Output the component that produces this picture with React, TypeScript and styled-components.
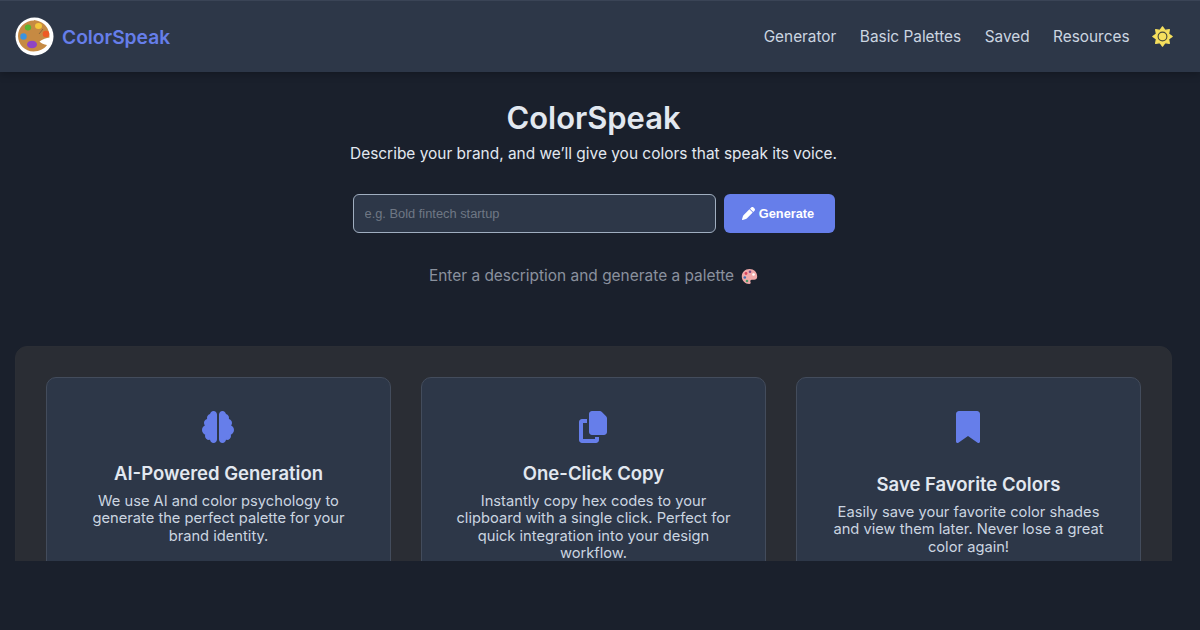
import styled, { createGlobalStyle } from "styled-components"
import { FaBrain, FaCopy, FaBookmark, FaPen } from "react-icons/fa6"

const GlobalStyle = createGlobalStyle`
    html, body {
        margin: 0;
        height: 630px;
        overflow: hidden;
        background: #1a202c;
        font-family: "Inter", "Liberation Sans", sans-serif;
    }
    * {
        box-sizing: border-box;
    }
`

const Page = styled.div`
    height: 561px;
    overflow: hidden;
    color: #e2e8f0;
`

const Navbar = styled.nav`
    height: 72px;
    background: #2d3748;
    border-top: 1px solid #3a4456;
    box-shadow: 0 2px 8px rgba(0, 0, 0, 0.25);
    padding: 0 27px 0 15px;
    display: flex;
    align-items: center;
    justify-content: space-between;
`

const Brand = styled.div`
    display: flex;
    align-items: center;
    gap: 8px;
    font-size: 19.2px;
    font-weight: 600;
    color: #667eea;
`

const Logo = styled.svg`
    width: 39px;
    height: 39px;
    display: block;
`

const NavLinks = styled.div`
    display: flex;
    align-items: center;
    gap: 23.5px;
`

const NavLink = styled.a`
    font-size: 15.36px;
    color: #cbd5e0;
`

const ThemeIcon = styled.svg`
    width: 21px;
    height: 21px;
    margin-left: -1px;
    display: block;
`

const Main = styled.main`
    width: 1187px;
    padding: 0 15px;
`

const Hero = styled.section`
    display: flex;
    flex-direction: column;
    align-items: center;
    padding-top: 26px;
`

const Title = styled.h1`
    margin: 0;
    font-size: 30.9px;
    line-height: 40px;
    font-weight: 600;
    color: #e2e8f0;
`

const Subtitle = styled.p`
    margin: 4px 0 0;
    font-size: 15.44px;
    line-height: 24px;
    color: #e2e8f0;
`

const Form = styled.form`
    display: flex;
    gap: 8px;
    margin-top: 28px;
`

const PromptInput = styled.input`
    width: 363px;
    height: 39px;
    padding: 0 11px;
    background: #2d3748;
    border: 1px solid #a0aec0;
    border-radius: 6px;
    font-family: "Liberation Sans", sans-serif;
    font-size: 12.85px;
    color: #e2e8f0;

    &::placeholder {
        color: #6f7785;
        opacity: 1;
    }
`

const GenerateButton = styled.button`
    width: 111px;
    height: 39px;
    display: flex;
    align-items: center;
    justify-content: center;
    gap: 4px;
    padding: 0 8px 0 6px;
    background: #667eea;
    border: none;
    border-radius: 6px;
    font-family: "Liberation Sans", sans-serif;
    font-size: 12.8px;
    font-weight: 700;
    color: #ffffff;

    svg {
        width: 13px;
        height: 13px;
    }
`

const Hint = styled.p`
    margin: 31px 0 0;
    font-size: 15.44px;
    line-height: 24px;
    color: #8a919e;
    display: flex;
    align-items: center;
    gap: 7px;
`

const HintIcon = styled.svg`
    width: 17px;
    height: 17px;
    display: block;
`

const Features = styled.section`
    margin-top: 58px;
    padding: 30px;
    background: #2a2d34;
    border: 1px solid #2b2e35;
    border-radius: 12px;
    display: grid;
    grid-template-columns: repeat(3, 1fr);
    gap: 30px;
`

const Card = styled.article`
    height: 260px;
    background: #2d3748;
    border: 1px solid #434c5c;
    border-radius: 10px;
    padding: 33px 30px 0;
    display: flex;
    flex-direction: column;
    align-items: center;
    text-align: center;
`

const CardIcon = styled.div<{ $tall?: boolean }>`
    height: ${(p) => (p.$tall ? "47px" : "36px")};
    padding-right: 2px;
    display: flex;
    align-items: flex-start;
    color: #667eea;
    font-size: 32px;

    svg {
        display: block;
    }
`

const CardTitle = styled.h3`
    margin: 14px 0 0;
    font-size: 18.5px;
    line-height: 24px;
    font-weight: 600;
    color: #e2e8f0;
`

const CardText = styled.p`
    margin: 8px 0 0;
    font-size: 14.7px;
    line-height: 17.4px;
    color: #cbd5e0;
`

const features = [
    {
        icon: <FaBrain />,
        title: "AI-Powered Generation",
        text: "We use AI and color psychology to generate the perfect palette for your brand identity.",
    },
    {
        icon: <FaCopy />,
        title: "One-Click Copy",
        text: "Instantly copy hex codes to your clipboard with a single click. Perfect for quick integration into your design workflow.",
    },
    {
        icon: <FaBookmark />,
        title: "Save Favorite Colors",
        text: "Easily save your favorite color shades and view them later. Never lose a great color again!",
        tall: true,
    },
]

function PaletteLogo() {
    return (
        <Logo viewBox="0 0 39 39">
            <circle cx="19.5" cy="19.5" r="19" fill="#ffffff" />
            <path
                d="M19 3.5C10 3.5 3 10.5 3 19c0 8.5 7 15.5 15.5 15.5 6 0 11.5-3 13.5-6.5-3-.5-6-1.5-7.5-3.5 3-2.5 7-3.5 10-4 .5-6-3-16-15.5-17.5z"
                fill="#c68a43"
            />
            <ellipse cx="13" cy="10.5" rx="3.2" ry="3" fill="#5cb531" />
            <ellipse cx="23.5" cy="9" rx="3.5" ry="3" fill="#f4c63a" />
            <ellipse cx="8.5" cy="19.5" rx="3.2" ry="3.2" fill="#3a93e0" />
            <ellipse cx="31" cy="17" rx="3.3" ry="3.3" fill="#ee5a24" />
            <ellipse cx="17" cy="27.5" rx="5" ry="3.8" fill="#8e44c4" />
            <path d="M24 17l4-5" stroke="#8c6a3f" strokeWidth="1" />
        </Logo>
    )
}

function SunIcon() {
    const points = Array.from({ length: 8 }, (_, i) => {
        const a = (i * Math.PI) / 4
        const b = a + Math.PI / 8
        return `${12 + 11 * Math.sin(a)},${12 - 11 * Math.cos(a)} ${12 + 7.5 * Math.sin(b)},${12 - 7.5 * Math.cos(b)}`
    }).join(" ")
    return (
        <ThemeIcon viewBox="0 0 24 24">
            <polygon points={points} fill="#f6e05e" stroke="#f6e05e" strokeWidth="1.5" strokeLinejoin="round" />
            <circle cx="12" cy="12" r="5" fill="#f6e05e" stroke="#4a4a3a" strokeWidth="1.3" />
        </ThemeIcon>
    )
}

function PaletteEmoji() {
    return (
        <HintIcon viewBox="0 0 17 17">
            <path
                d="M8.5 1C4 1 .8 4.3.8 8.5s3.4 7.5 7.4 7.5c1.6 0 1.7-1.2 1.3-2-.5-1-.1-2.2 1.3-2.2h2.4c1.7 0 3-1.2 3-3C16.2 4 13 1 8.5 1z"
                fill="#f0a9a9"
            />
            <circle cx="5" cy="5.5" r="1.4" fill="#d9455f" />
            <circle cx="9" cy="3.8" r="1.3" fill="#7d4a8c" />
            <circle cx="3.8" cy="9.5" r="1.3" fill="#3d6fb4" />
            <circle cx="6" cy="13" r="1.3" fill="#4d9a6a" />
            <circle cx="12.5" cy="6.5" r="1.3" fill="#ffffff" />
        </HintIcon>
    )
}

export default function App() {
    return (
        <>
            <GlobalStyle />
            <Page>
                <Navbar>
                    <Brand>
                        <PaletteLogo />
                        ColorSpeak
                    </Brand>
                    <NavLinks>
                        <NavLink>Generator</NavLink>
                        <NavLink>Basic Palettes</NavLink>
                        <NavLink>Saved</NavLink>
                        <NavLink>Resources</NavLink>
                        <SunIcon />
                    </NavLinks>
                </Navbar>
                <Main>
                    <Hero>
                        <Title>ColorSpeak</Title>
                        <Subtitle>Describe your brand, and we’ll give you colors that speak its voice.</Subtitle>
                        <Form>
                            <PromptInput placeholder="e.g. Bold fintech startup" />
                            <GenerateButton type="button">
                                <FaPen />
                                Generate
                            </GenerateButton>
                        </Form>
                        <Hint>
                            Enter a description and generate a palette
                            <PaletteEmoji />
                        </Hint>
                    </Hero>
                    <Features>
                        {features.map((f) => (
                            <Card key={f.title}>
                                <CardIcon $tall={f.tall}>{f.icon}</CardIcon>
                                <CardTitle>{f.title}</CardTitle>
                                <CardText>{f.text}</CardText>
                            </Card>
                        ))}
                    </Features>
                </Main>
            </Page>
        </>
    )
}
